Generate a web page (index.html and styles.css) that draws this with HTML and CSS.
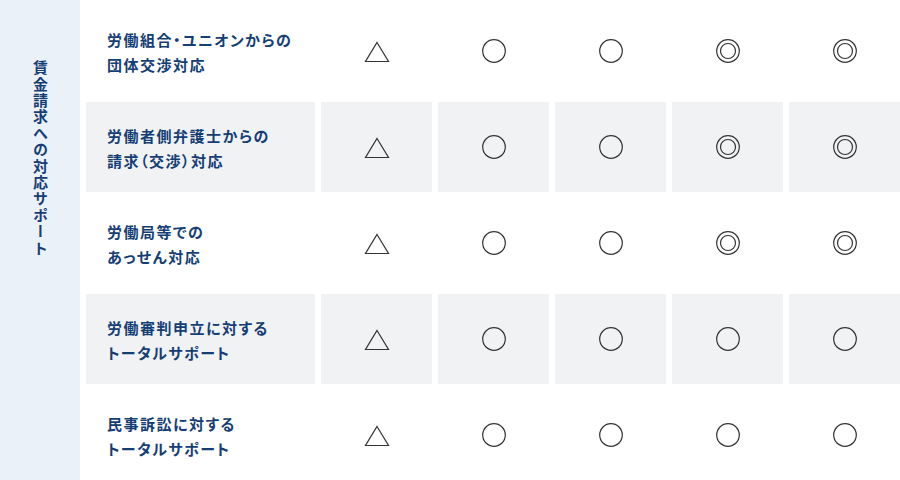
FILE: index.html
```html
<!DOCTYPE html>
<html lang="ja">
<head>
<meta charset="utf-8">
<link rel="stylesheet" href="styles.css">
</head>
<body>
<div class="page">
  <div class="side"><span class="side-text">賃金請求への対応サポート</span></div>
  <div class="table">
    <div class="label">労働組合・ユニオンからの<br>団体交渉対応</div>
    <div class="cell"><svg class="tri" viewBox="0 0 26 22"><polygon points="13,1.5 24.5,20.5 1.5,20.5"/></svg></div>
    <div class="cell"><svg class="circ" viewBox="0 0 26 26"><circle cx="13" cy="13" r="11.3"/></svg></div>
    <div class="cell"><svg class="circ" viewBox="0 0 26 26"><circle cx="13" cy="13" r="11.3"/></svg></div>
    <div class="cell"><svg class="circ" viewBox="0 0 26 26"><circle cx="13" cy="13" r="11.3"/><circle cx="13" cy="13" r="7.5"/></svg></div>
    <div class="cell"><svg class="circ" viewBox="0 0 26 26"><circle cx="13" cy="13" r="11.3"/><circle cx="13" cy="13" r="7.5"/></svg></div>

    <div class="label alt">労働者側弁護士からの<br>請求（交渉）対応</div>
    <div class="cell alt"><svg class="tri" viewBox="0 0 26 22"><polygon points="13,1.5 24.5,20.5 1.5,20.5"/></svg></div>
    <div class="cell alt"><svg class="circ" viewBox="0 0 26 26"><circle cx="13" cy="13" r="11.3"/></svg></div>
    <div class="cell alt"><svg class="circ" viewBox="0 0 26 26"><circle cx="13" cy="13" r="11.3"/></svg></div>
    <div class="cell alt"><svg class="circ" viewBox="0 0 26 26"><circle cx="13" cy="13" r="11.3"/><circle cx="13" cy="13" r="7.5"/></svg></div>
    <div class="cell alt"><svg class="circ" viewBox="0 0 26 26"><circle cx="13" cy="13" r="11.3"/><circle cx="13" cy="13" r="7.5"/></svg></div>

    <div class="label">労働局等での<br>あっせん対応</div>
    <div class="cell"><svg class="tri" viewBox="0 0 26 22"><polygon points="13,1.5 24.5,20.5 1.5,20.5"/></svg></div>
    <div class="cell"><svg class="circ" viewBox="0 0 26 26"><circle cx="13" cy="13" r="11.3"/></svg></div>
    <div class="cell"><svg class="circ" viewBox="0 0 26 26"><circle cx="13" cy="13" r="11.3"/></svg></div>
    <div class="cell"><svg class="circ" viewBox="0 0 26 26"><circle cx="13" cy="13" r="11.3"/><circle cx="13" cy="13" r="7.5"/></svg></div>
    <div class="cell"><svg class="circ" viewBox="0 0 26 26"><circle cx="13" cy="13" r="11.3"/><circle cx="13" cy="13" r="7.5"/></svg></div>

    <div class="label alt">労働審判申立に対する<br>トータルサポート</div>
    <div class="cell alt"><svg class="tri" viewBox="0 0 26 22"><polygon points="13,1.5 24.5,20.5 1.5,20.5"/></svg></div>
    <div class="cell alt"><svg class="circ" viewBox="0 0 26 26"><circle cx="13" cy="13" r="11.3"/></svg></div>
    <div class="cell alt"><svg class="circ" viewBox="0 0 26 26"><circle cx="13" cy="13" r="11.3"/></svg></div>
    <div class="cell alt"><svg class="circ" viewBox="0 0 26 26"><circle cx="13" cy="13" r="11.3"/></svg></div>
    <div class="cell alt"><svg class="circ" viewBox="0 0 26 26"><circle cx="13" cy="13" r="11.3"/></svg></div>

    <div class="label">民事訴訟に対する<br>トータルサポート</div>
    <div class="cell"><svg class="tri" viewBox="0 0 26 22"><polygon points="13,1.5 24.5,20.5 1.5,20.5"/></svg></div>
    <div class="cell"><svg class="circ" viewBox="0 0 26 26"><circle cx="13" cy="13" r="11.3"/></svg></div>
    <div class="cell"><svg class="circ" viewBox="0 0 26 26"><circle cx="13" cy="13" r="11.3"/></svg></div>
    <div class="cell"><svg class="circ" viewBox="0 0 26 26"><circle cx="13" cy="13" r="11.3"/></svg></div>
    <div class="cell"><svg class="circ" viewBox="0 0 26 26"><circle cx="13" cy="13" r="11.3"/></svg></div>
  </div>
</div>
</body>
</html>
```

FILE: styles.css
```css
* { box-sizing: border-box; }
html, body { margin: 0; padding: 0; background: #ffffff; }
body {
  font-family: "Noto Sans CJK JP", "Noto Sans", sans-serif;
  color: #153e75;
}
.page {
  display: flex;
  width: 900px;
  height: 480px;
  overflow: hidden;
}
.side {
  flex: 0 0 80px;
  background: #eaf1f9;
  display: flex;
  justify-content: center;
  padding-top: 60px;
}
.side-text {
  writing-mode: vertical-rl;
  font-size: 15px;
  font-weight: 700;
  letter-spacing: 1.4px;
  line-height: 16px;
}
.table {
  display: grid;
  grid-template-columns: 229px repeat(5, 111px);
  grid-auto-rows: 90px;
  column-gap: 6px;
  row-gap: 6px;
  padding: 6px 0 0 6px;
}
.label {
  display: flex;
  align-items: center;
  padding-left: 21px;
  padding-top: 1px;
  font-size: 15px;
  font-weight: 700;
  line-height: 25px;
  letter-spacing: 1.5px;
  font-feature-settings: "palt";
}
.cell {
  display: flex;
  align-items: center;
  justify-content: center;
}
.alt { background: #f1f2f4; }
svg { display: block; fill: none; stroke: #333333; stroke-width: 1.2; }
.tri { width: 26px; height: 22px; margin-top: 1px; }
.circ { width: 26px; height: 26px; }
```
